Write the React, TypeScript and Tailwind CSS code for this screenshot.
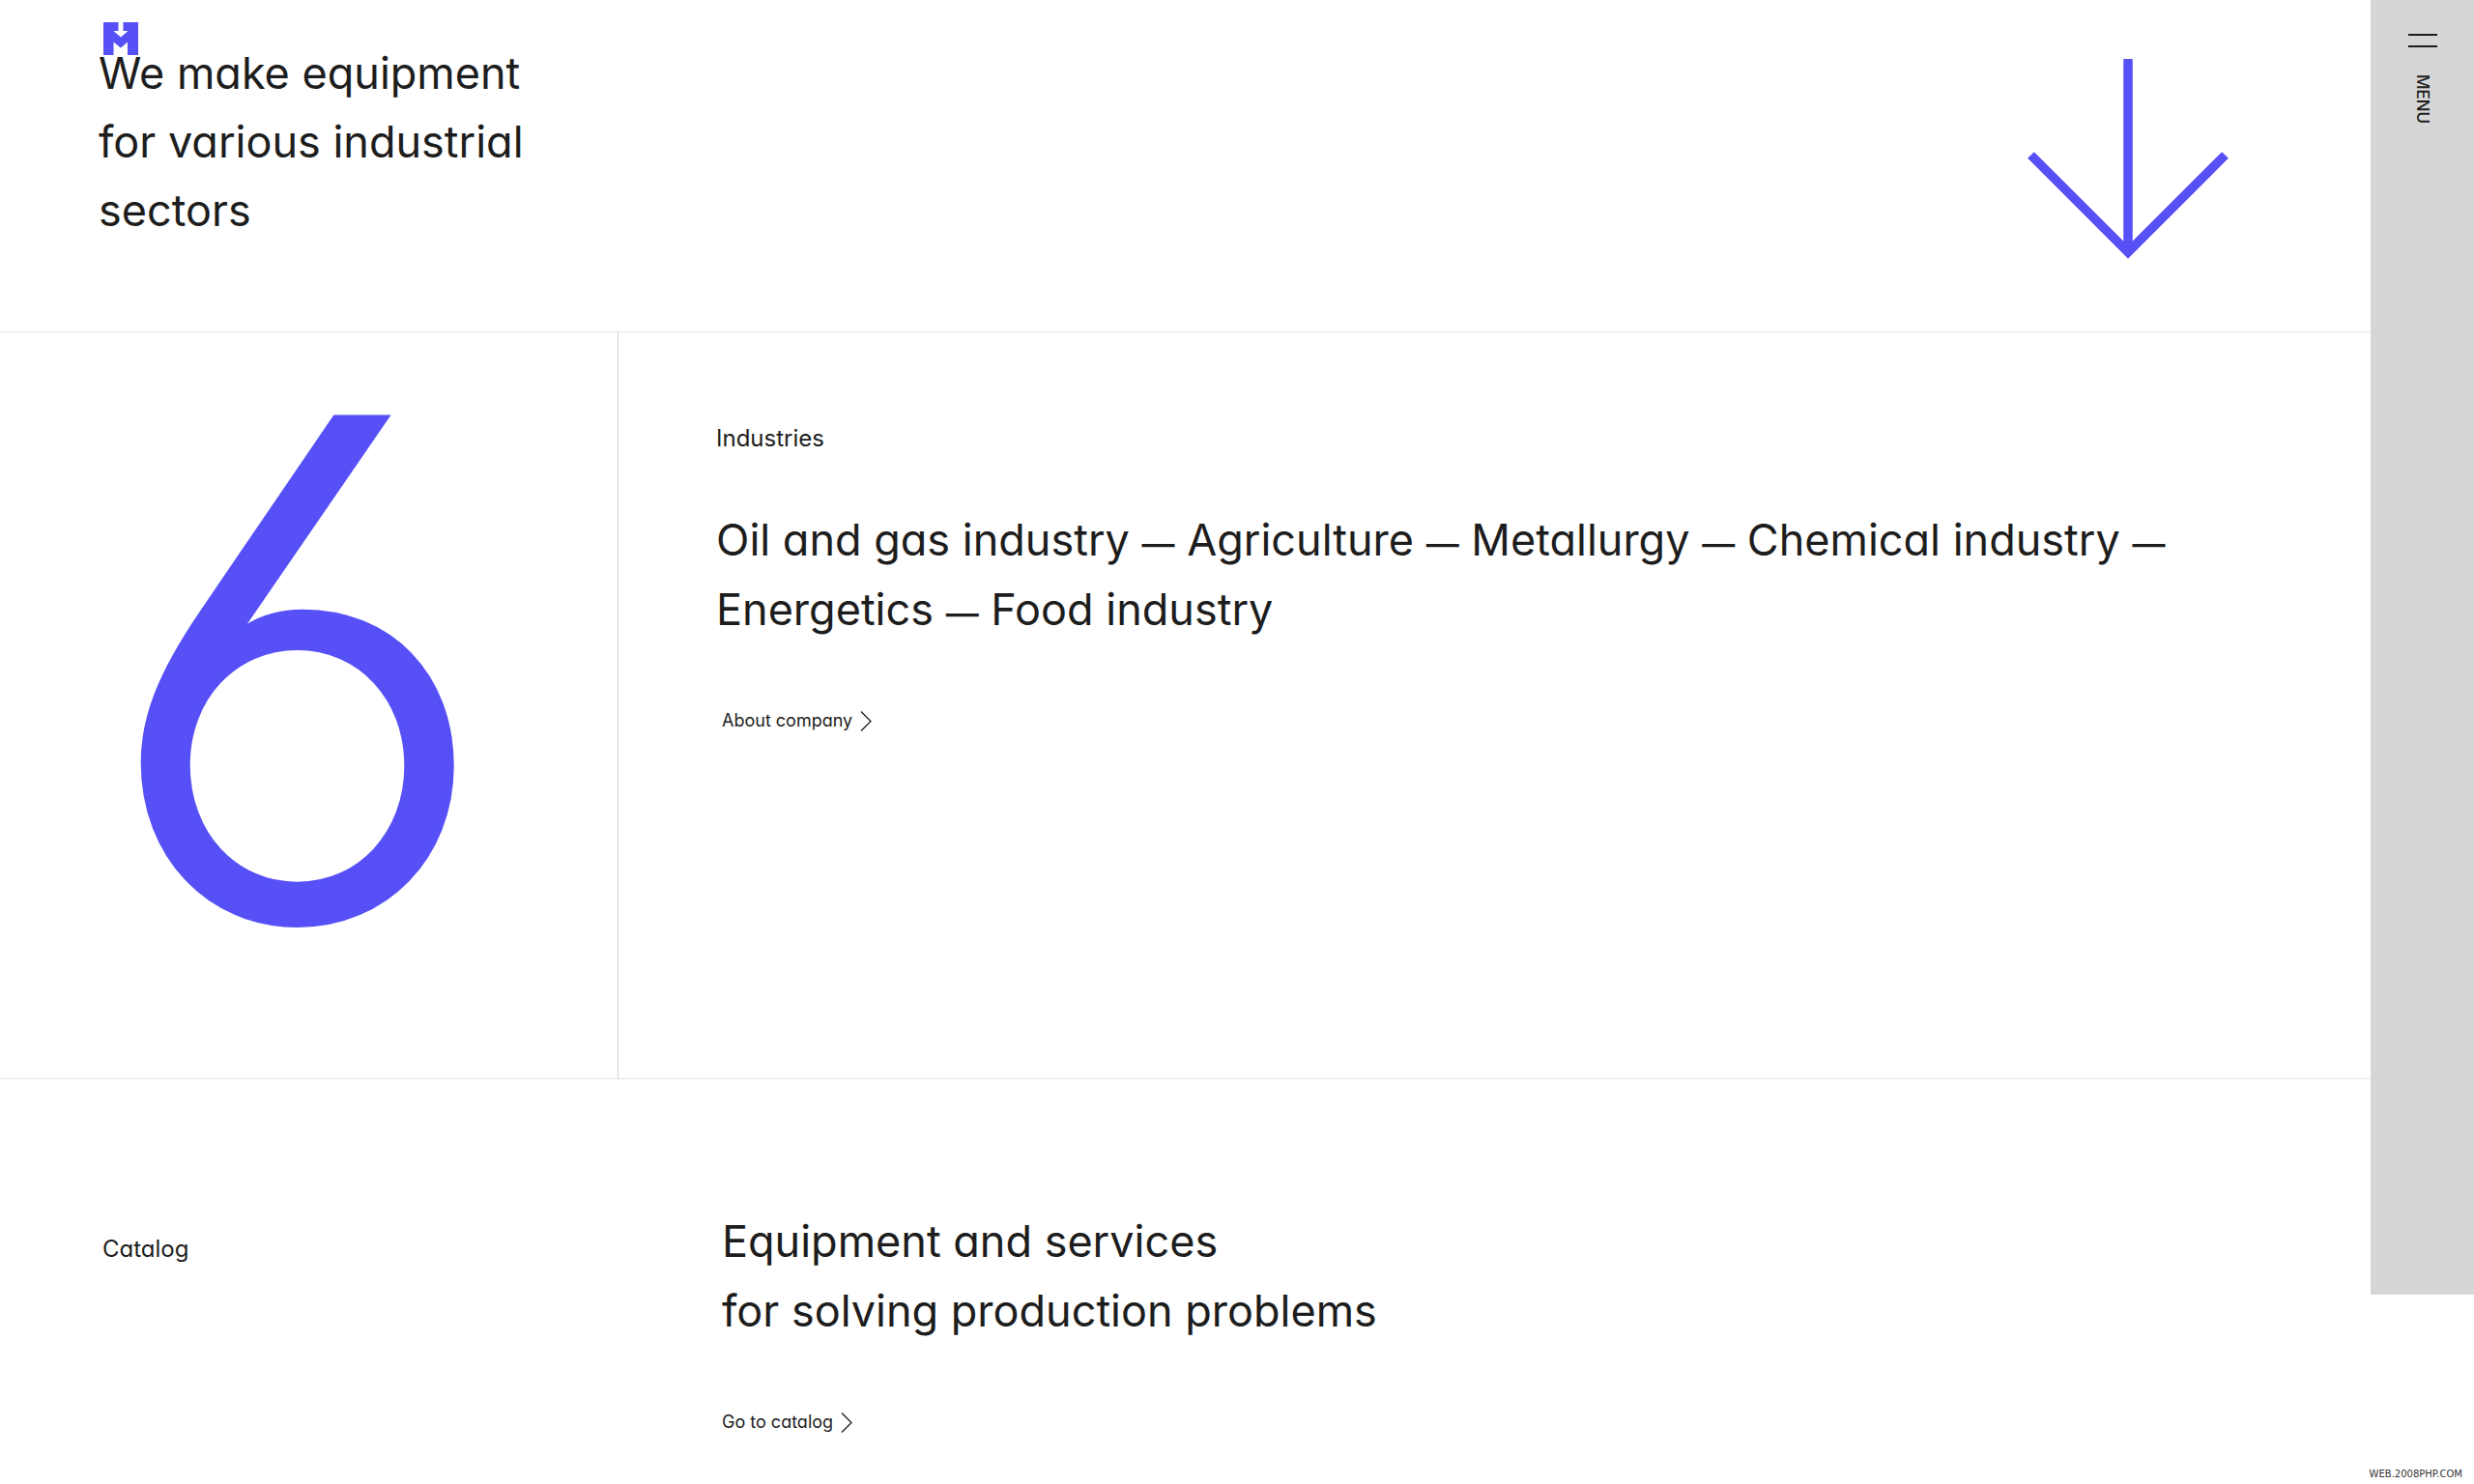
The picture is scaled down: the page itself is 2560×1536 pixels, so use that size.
import { Fragment } from "react";

const headline =
  "text-[45px] font-normal leading-[72px] [font-feature-settings:'cv11']";
const label = "text-[24px] leading-[32px] [font-feature-settings:'cv11']";

const industryRows = [
  ["Oil and gas industry", "Agriculture", "Metallurgy", "Chemical industry"],
  ["Energetics", "Food industry"],
];

function Logo() {
  return (
    <svg width="36" height="34" viewBox="0 0 36 34" fill="#5650f6" aria-hidden="true">
      <path d="M0 0H15.500V9H10.500L18 15.500L25.500 9H20.500V0H36V34H25V20.500L18 26.500L10.500 20.500V34H0Z" />
    </svg>
  );
}

function DownArrow() {
  return (
    <svg
      width="208"
      height="208"
      viewBox="0 0 208 208"
      fill="none"
      stroke="#5650f6"
      strokeWidth="9.5"
      aria-hidden="true"
    >
      <path d="M104 0V200" />
      <path d="M3.500 99.500L104 200L204.500 99.500" />
    </svg>
  );
}

function MoreLink({ href, children }: { href: string; children: string }) {
  return (
    <a
      href={href}
      className="inline-flex items-center gap-2 text-[18px] leading-6 [font-feature-settings:'cv11']"
    >
      {children}
      <svg
        width="13"
        height="22"
        viewBox="0 0 13 22"
        fill="none"
        stroke="#1d1d1d"
        strokeWidth="1.3"
        aria-hidden="true"
      >
        <path d="M1 1.500L11 11.500L1 21.500" />
      </svg>
    </a>
  );
}

function IndustryRow({ items, last }: { items: string[]; last: boolean }) {
  return (
    <>
      {items.map((item, i) => (
        <Fragment key={item}>
          {item}
          {(!last || i < items.length - 1) && (
            <>
              {" "}
              <span className="text-[34px] font-medium leading-none">—</span>{" "}
            </>
          )}
        </Fragment>
      ))}
      {!last && <br />}
    </>
  );
}

export default function App() {
  return (
    <div className="relative flex min-h-screen items-start bg-white font-['Inter',sans-serif] text-[#1d1d1d]">
      <a href="#top" aria-label="Home" className="absolute left-[107px] top-[23px]">
        <Logo />
      </a>

      <main id="top" className="min-w-0 flex-1">
        <section className="flex h-[344px] items-start justify-between border-b border-[#e4e4e4] pl-[102px] pr-[147px]">
          <h1 className="pt-10 text-[45px] leading-[71px] [font-feature-settings:'cv11']">
            We make equipment
            <br />
            for various industrial
            <br />
            sectors
          </h1>
          <div className="pt-[61px]">
            <DownArrow />
          </div>
        </section>

        <section className="flex h-[773px] border-b border-[#e4e4e4]">
          <div className="w-[640px] shrink-0 border-r border-[#d4d4d4] pl-[102px]">
            <div className="text-[714px] font-light leading-[694px] text-[#5650f6] [-webkit-text-stroke:4px_#5650f6] [font-feature-settings:'cv03']">
              6
            </div>
          </div>
          <div className="flex flex-1 flex-col items-start pl-[101px] pt-[94px]">
            <h2 className={label}>Industries</h2>
            <p className={`${headline} mt-[53px]`}>
              {industryRows.map((items, i) => (
                <IndustryRow key={i} items={items} last={i === industryRows.length - 1} />
              ))}
            </p>
            <div className="mt-[67px] pl-1.5">
              <MoreLink href="#about">About company</MoreLink>
            </div>
          </div>
        </section>

        <section id="catalog" className="flex">
          <h2 className={`${label} w-[640px] shrink-0 pl-[106px] pt-[160px]`}>Catalog</h2>
          <div className="flex-1 pl-[107px] pt-[132px]">
            <p className={headline}>
              Equipment and services
              <br />
              for solving production problems
            </p>
            <div className="mt-[67px]">
              <MoreLink href="#catalog">Go to catalog</MoreLink>
            </div>
          </div>
        </section>
      </main>

      <aside className="h-[1340px] w-[107px] shrink-0 bg-[#d6d6d6]">
        <button type="button" className="flex w-full flex-col items-center gap-7 pt-[35px]">
          <span className="flex w-[30px] flex-col gap-2.5">
            <span className="h-0.5 bg-[#1d1d1d]" />
            <span className="h-0.5 bg-[#1d1d1d]" />
          </span>
          <span className="text-[17px] font-medium leading-5 [writing-mode:vertical-rl]">MENU</span>
        </button>
      </aside>

      <small className="absolute bottom-1 right-3 font-['DejaVu_Sans',sans-serif] text-[10px] leading-3 text-[#333]">
        WEB.2008PHP.COM
      </small>
    </div>
  );
}
